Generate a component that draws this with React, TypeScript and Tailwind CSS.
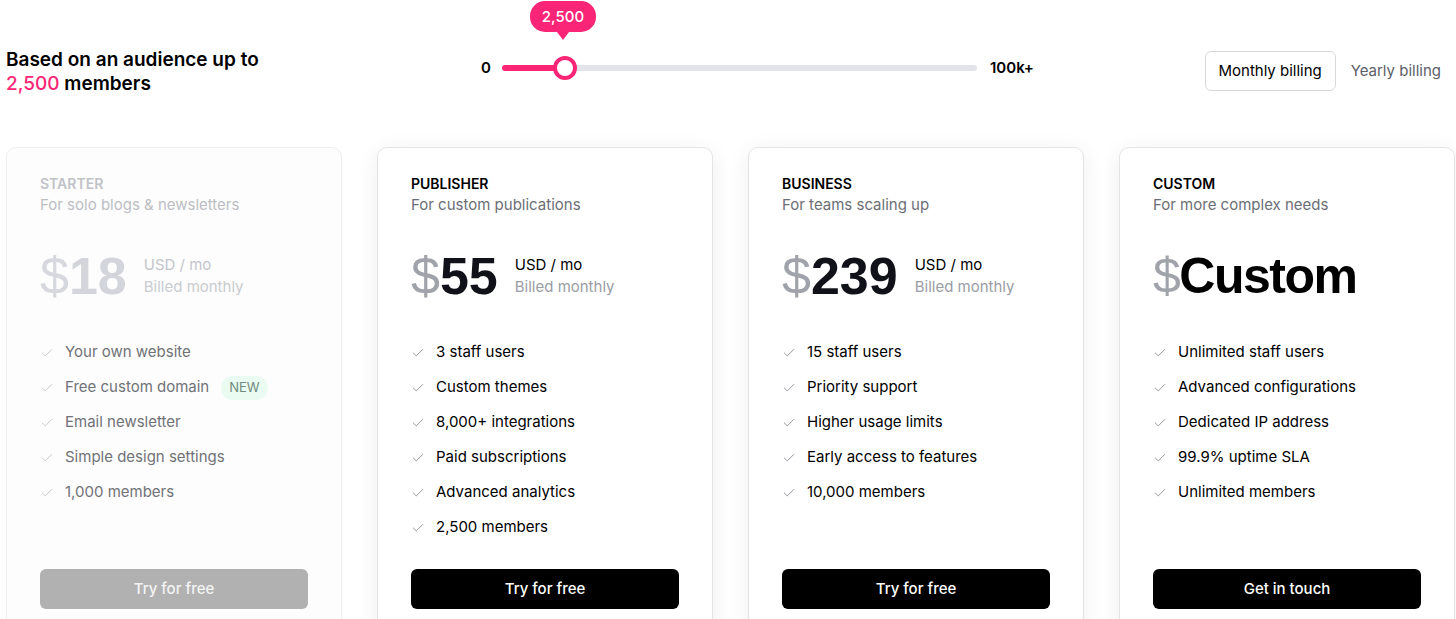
import { Check } from "lucide-react";

type Plan = {
  name: string;
  tagline: string;
  price: string;
  custom?: boolean;
  features: { label: string; badge?: string }[];
  cta: string;
  muted?: boolean;
};

const plans: Plan[] = [
  {
    name: "Starter",
    tagline: "For solo blogs & newsletters",
    price: "18",
    muted: true,
    features: [
      { label: "Your own website" },
      { label: "Free custom domain", badge: "NEW" },
      { label: "Email newsletter" },
      { label: "Simple design settings" },
      { label: "1,000 members" },
    ],
    cta: "Try for free",
  },
  {
    name: "Publisher",
    tagline: "For custom publications",
    price: "55",
    features: [
      { label: "3 staff users" },
      { label: "Custom themes" },
      { label: "8,000+ integrations" },
      { label: "Paid subscriptions" },
      { label: "Advanced analytics" },
      { label: "2,500 members" },
    ],
    cta: "Try for free",
  },
  {
    name: "Business",
    tagline: "For teams scaling up",
    price: "239",
    features: [
      { label: "15 staff users" },
      { label: "Priority support" },
      { label: "Higher usage limits" },
      { label: "Early access to features" },
      { label: "10,000 members" },
    ],
    cta: "Try for free",
  },
  {
    name: "Custom",
    tagline: "For more complex needs",
    price: "Custom",
    custom: true,
    features: [
      { label: "Unlimited staff users" },
      { label: "Advanced configurations" },
      { label: "Dedicated IP address" },
      { label: "99.9% uptime SLA" },
      { label: "Unlimited members" },
    ],
    cta: "Get in touch",
  },
];

function AudienceSlider() {
  return (
    <div className="flex w-[560px] items-center">
      <span className="w-[24px] pl-[3px] text-[15px] font-semibold text-black">0</span>
      <div className="relative h-[6px] w-[475px] rounded-full bg-[#e2e4e9]">
        <div className="h-[6px] w-[63px] rounded-full bg-[#fa2576]" />
        <div className="absolute left-[51px] top-[-9px] h-[24px] w-[24px] rounded-full border-[4px] border-[#fa2576] bg-white" />
        <div className="absolute left-[28px] top-[-64px] flex flex-col items-center">
          <div className="flex h-[31px] w-[66px] items-center justify-center rounded-[15px] bg-[#fa2576] text-[15px] font-medium text-white">
            2,500
          </div>
          <div className="h-0 w-0 border-x-[6px] border-t-[8px] border-x-transparent border-t-[#fa2576]" />
        </div>
      </div>
      <span className="pl-[13px] text-[15px] font-semibold text-black">100k+</span>
    </div>
  );
}

function PlanCard({ plan }: { plan: Plan }) {
  const m = plan.muted;
  return (
    <div
      className={`flex h-[490px] w-[336px] shrink-0 flex-col rounded-[10px] border px-[33px] pt-[26px] ${
        m
          ? "border-[#efeff1] bg-[#fdfdfd]"
          : "border-[#e3e4e8] bg-white shadow-[0_4px_22px_rgba(0,0,0,0.07)]"
      }`}
    >
      <p className={`text-[14px] font-semibold uppercase leading-[20px] ${m ? "text-[#c0c2c8]" : "text-black"}`}>
        {plan.name}
      </p>
      <p className={`text-[15px] leading-[22px] ${m ? "text-[#bcbec4]" : "text-[#6b6e76]"}`}>{plan.tagline}</p>

      <div className="mt-[32px] flex h-[56px] items-center gap-[17px]">
        <div
          className={`flex items-center font-['Liberation_Sans',Arial,sans-serif] leading-[56px] ${
            plan.custom ? "text-[50px] tracking-[-1.5px]" : "text-[52px]"
          }`}
        >
          <span className={m ? "text-[#d6d8dd]" : "text-[#a0a3aa]"}>$</span>
          <span className={`font-bold ${m ? "text-[#d3d5da]" : plan.custom ? "text-black" : "text-[#111219]"}`}>
            {plan.price}
          </span>
        </div>
        {!plan.custom && (
          <div className="flex flex-col text-[15px] leading-[22px]">
            <span className={m ? "text-[#c3c5cb]" : "text-black"}>USD / mo</span>
            <span className={m ? "text-[#c9cbd0]" : "text-[#9a9da5]"}>Billed monthly</span>
          </div>
        )}
      </div>

      <ul className="mt-[31px] flex h-[210px] flex-col">
        {plan.features.map((f) => (
          <li key={f.label} className="flex h-[35px] items-center gap-[11px]">
            <Check className={`h-[14px] w-[14px] ${m ? "text-[#c3c5cb]" : "text-[#8d9098]"}`} strokeWidth={1.6} />
            <span className={`text-[15px] ${m ? "text-[#707277]" : "text-black"}`}>{f.label}</span>
            {f.badge && (
              <span className="ml-[1px] flex h-[24px] items-center rounded-full bg-[#eafbf1] px-[8px] text-[13px] text-[#6f8a7e]">
                {f.badge}
              </span>
            )}
          </li>
        ))}
      </ul>

      <button
        type="button"
        className={`mt-[24px] h-[40px] w-full rounded-[6px] text-[15px] font-medium ${
          m ? "bg-[#b1b1b1] text-[#f4f4f4]" : "bg-black text-white"
        }`}
      >
        {plan.cta}
      </button>
    </div>
  );
}

export default function App() {
  return (
    <div className="h-[619px] w-[1456px] overflow-hidden bg-white font-['Inter',sans-serif]">
      <div className="flex h-[147px] items-start px-[6px] pt-[48px]">
        <h2 className="w-[472px] text-[19px] font-semibold leading-[24px] text-black">
          Based on an audience up to
          <br />
          <span className="font-medium text-[#fa2576]">2,500</span> members
        </h2>
        <div className="pt-[9px]">
          <AudienceSlider />
        </div>
        <div className="flex flex-1 items-center justify-end gap-[15px] pr-[9px] pt-[3px]">
          <button
            type="button"
            className="h-[40px] w-[131px] rounded-[6px] border border-[#d7d8dc] bg-white text-[15px] text-black"
          >
            Monthly billing
          </button>
          <span className="text-[15px] text-[#5d6068]">Yearly billing</span>
        </div>
      </div>

      <div className="flex gap-[35px] px-[6px]">
        {plans.map((p) => (
          <PlanCard key={p.name} plan={p} />
        ))}
      </div>
    </div>
  );
}
